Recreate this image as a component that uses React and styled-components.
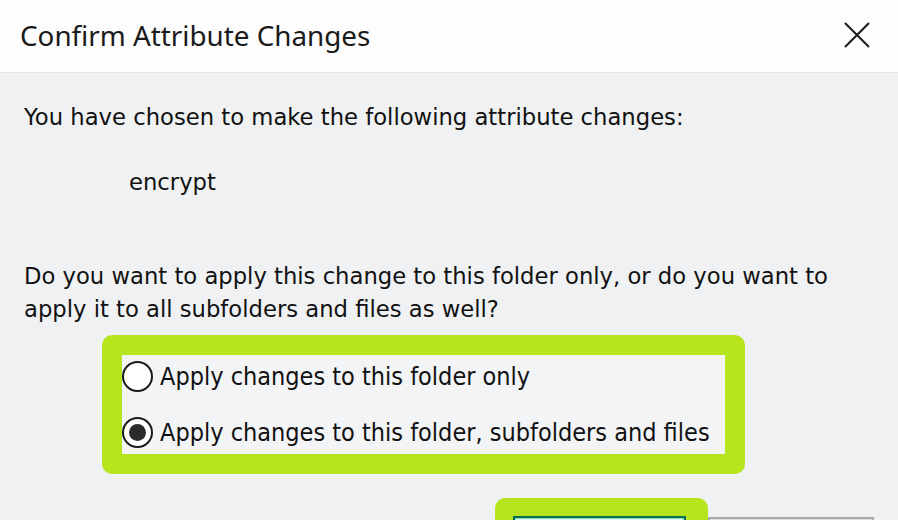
import React from 'react';
import styled, { createGlobalStyle } from 'styled-components';

const GlobalStyle = createGlobalStyle`
  html, body {
    margin: 0;
    padding: 0;
    background: #f0f1f3;
    overflow: hidden;
  }
`;

const Dialog = styled.div`
  width: 898px;
  height: 520px;
  display: flex;
  flex-direction: column;
  overflow: hidden;
  background: #f0f1f3;
  font-family: 'DejaVu Sans', Verdana, sans-serif;
  color: #111;
`;

const TitleBar = styled.div`
  height: 72px;
  flex-shrink: 0;
  display: flex;
  align-items: center;
  justify-content: space-between;
  padding: 0 28px 0 20px;
  background: #fdfdfd;
  border-bottom: 1px solid #e6e6e8;
`;

const Title = styled.div`
  font-family: 'Noto Sans', 'Open Sans', sans-serif;
  font-size: 27.8px;
  color: #1a1a1a;
  padding-bottom: 2px;
`;

const CloseButton = styled.div`
  width: 26px;
  height: 26px;
  display: flex;
  margin-bottom: 2px;
`;

const Body = styled.div`
  flex: 1;
  padding: 0 24px;
  display: flex;
  flex-direction: column;
`;

const Text = styled.div`
  font-size: 22.7px;
  line-height: 33px;
  white-space: nowrap;
  margin-top: ${({ $top }) => $top}px;
  margin-left: ${({ $indent }) => $indent || 0}px;
`;

const Highlight = styled.div`
  background: #b6e51d;
  border-radius: 10px;
  padding: 20px;
  margin-left: ${({ $left }) => $left}px;
  margin-top: ${({ $top }) => $top}px;
  width: ${({ $width }) => $width}px;
  box-sizing: border-box;
`;

const OptionsPanel = styled.div`
  background: #f3f4f6;
  height: 99px;
  display: flex;
  flex-direction: column;
  justify-content: center;
  gap: 25px;
`;

const Option = styled.label`
  display: flex;
  align-items: center;
  gap: 7px;
  font-family: 'DejaVu Sans Condensed', 'DejaVu Sans', sans-serif;
  font-size: 25px;
  line-height: 31px;
  white-space: nowrap;
`;

const Radio = styled.span`
  width: 31px;
  height: 31px;
  box-sizing: border-box;
  border-radius: 50%;
  border: 2px solid #1a1a1a;
  background: #ffffff;
  display: flex;
  align-items: center;
  justify-content: center;
  flex-shrink: 0;

  &::after {
    content: '';
    width: 17px;
    height: 17px;
    border-radius: 50%;
    background: ${({ $checked }) => ($checked ? '#2b2b2b' : 'transparent')};
  }
`;

const ButtonRow = styled.div`
  display: flex;
  align-items: flex-start;
  margin-top: 24px;
  margin-left: 471px;
`;

const ButtonHighlight = styled.div`
  background: #b6e51d;
  border-radius: 10px;
  width: 213px;
  height: 60px;
  padding: 18px 22px 0 18px;
  box-sizing: border-box;
`;

const Button = styled.div`
  height: 40px;
  box-sizing: border-box;
  border: 2px solid ${({ $primary }) => ($primary ? '#0a6b58' : '#a9a9a9')};
  background: ${({ $primary }) => ($primary ? '#e5f1fb' : '#e1e1e1')};
  box-shadow: ${({ $primary }) => ($primary ? 'inset 0 0 0 1px #7fe0a0' : 'none')};
  width: ${({ $width }) => $width}px;
  margin-top: ${({ $top }) => $top || 0}px;
`;

const App = () => {
  return (
    <>
      <GlobalStyle />
      <Dialog>
        <TitleBar>
          <Title>Confirm Attribute Changes</Title>
          <CloseButton>
            <svg width="26" height="26" viewBox="0 0 26 26">
              <path d="M1 1 L25 25 M25 1 L1 25" stroke="#1a1a1a" strokeWidth="2" fill="none" />
            </svg>
          </CloseButton>
        </TitleBar>
        <Body>
          <Text $top={28}>You have chosen to make the following attribute changes:</Text>
          <Text $top={32} $indent={105}>encrypt</Text>
          <Text $top={61}>
            Do you want to apply this change to this folder only, or do you want to
            <br />
            apply it to all subfolders and files as well?
          </Text>
          <Highlight $left={78} $top={9} $width={643}>
            <OptionsPanel>
              <Option>
                <Radio />
                Apply changes to this folder only
              </Option>
              <Option>
                <Radio $checked />
                Apply changes to this folder, subfolders and files
              </Option>
            </OptionsPanel>
          </Highlight>
          <ButtonRow>
            <ButtonHighlight>
              <Button $primary $width={173} />
            </ButtonHighlight>
            <Button $width={166} $top={19} />
          </ButtonRow>
        </Body>
      </Dialog>
    </>
  );
};

export default App;
